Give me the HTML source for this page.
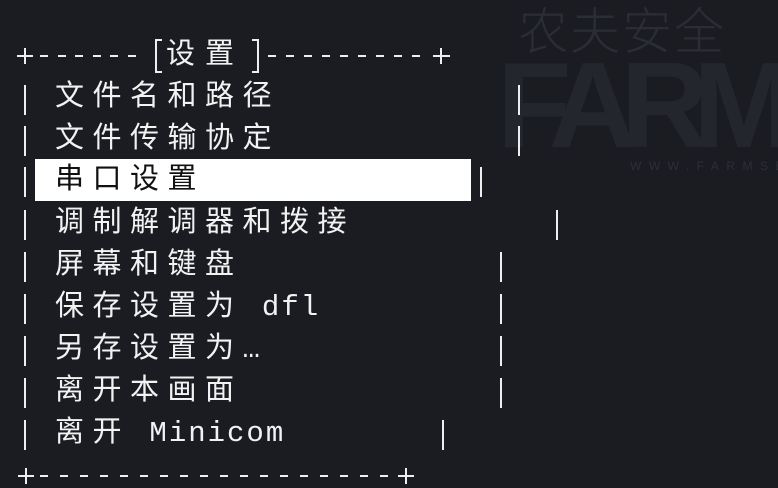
<!DOCTYPE html>
<html><head><meta charset="utf-8"><style>
body{margin:0;width:778px;height:488px;background:#1a1c22;overflow:hidden;position:relative;font-family:"Liberation Mono","Noto Sans CJK SC",monospace;color:#f2f2f2}
.t{position:absolute;font-size:29px;line-height:42px;letter-spacing:8.5px;white-space:pre}
.b{position:absolute;width:2px;height:30px;background:#eee}
.wm{position:absolute;white-space:pre}
</style></head><body>
<div style="position:absolute;left:0;top:0;width:778px;height:488px;overflow:hidden">
<div class="wm" style="left:518px;top:-8px;font:200 50px 'Noto Sans CJK SC',sans-serif;color:#2a2d34;letter-spacing:2px">农夫安全</div>
<div class="wm" style="left:497px;top:44px;font:bold 122px/1.0 'Liberation Sans',sans-serif;color:#23262d;letter-spacing:-16px">FARM</div>
<div class="wm" style="left:630px;top:159px;font:12px 'Liberation Sans',sans-serif;color:#2c2f36;letter-spacing:7.5px">WWW.FARMSE</div>
</div>

<div style="position:absolute;left:35px;top:159px;width:436px;height:42px;background:#fff"></div>

<svg width="778" height="488" style="position:absolute;left:0;top:0" stroke="#eee" stroke-width="2" fill="none">
<path d="M17 56h16M25 48v16"/>
<path d="M40 56h8M58 56h8M75 56h8M93 56h8M110 56h8M128 56h8"/>
<path d="M162 40h-6v32h6"/>
<path d="M252 40h6v32h-6"/>
<path d="M268 56h8M286 56h8M304 56h8M322 56h8M340 56h8M358 56h8M376 56h8M394 56h8M412 56h8"/>
<path d="M433 56h17M441 48v16"/>
<path d="M18 476h16M26 468v16"/>
<path d="M40 476h8M60 476h8M80 476h8M100 476h8M120 476h8M140 476h8M160 476h8M180 476h8M200 476h8M220 476h8M240 476h8M260 476h8M280 476h8M300 476h8M320 476h8M340 476h8M360 476h8M380 476h8"/>
<path d="M398 476h16M406 468v16"/>
</svg>
<div class="t" style="left:166px;top:35px;letter-spacing:10px">设置</div>

<div class="t" style="left:55px;top:77px">文件名和路径</div>
<div class="t" style="left:55px;top:119px">文件传输协定</div>
<div class="t" style="left:55px;top:160px;color:#111">串口设置</div>
<div class="t" style="left:55px;top:203px">调制解调器和拨接</div>
<div class="t" style="left:55px;top:245px">屏幕和键盘</div>
<div class="t" style="left:55px;top:287px">保存设置为<span style="letter-spacing:2px"> dfl</span></div>
<div class="t" style="left:55px;top:329px">另存设置为<span style="letter-spacing:0">…</span></div>
<div class="t" style="left:55px;top:371px">离开本画面</div>
<div class="t" style="left:55px;top:413px">离开<span style="letter-spacing:2px"> Minicom</span></div>

<div class="b" style="left:24px;top:85px"></div><div class="b" style="left:518px;top:85px"></div>
<div class="b" style="left:24px;top:126px"></div><div class="b" style="left:518px;top:126px"></div>
<div class="b" style="left:24px;top:167px"></div><div class="b" style="left:480px;top:167px"></div>
<div class="b" style="left:24px;top:210px"></div><div class="b" style="left:556px;top:210px"></div>
<div class="b" style="left:24px;top:252px"></div><div class="b" style="left:500px;top:252px"></div>
<div class="b" style="left:24px;top:294px"></div><div class="b" style="left:500px;top:294px"></div>
<div class="b" style="left:24px;top:336px"></div><div class="b" style="left:500px;top:336px"></div>
<div class="b" style="left:24px;top:378px"></div><div class="b" style="left:500px;top:378px"></div>
<div class="b" style="left:24px;top:420px"></div><div class="b" style="left:442px;top:420px"></div>
</body></html>
